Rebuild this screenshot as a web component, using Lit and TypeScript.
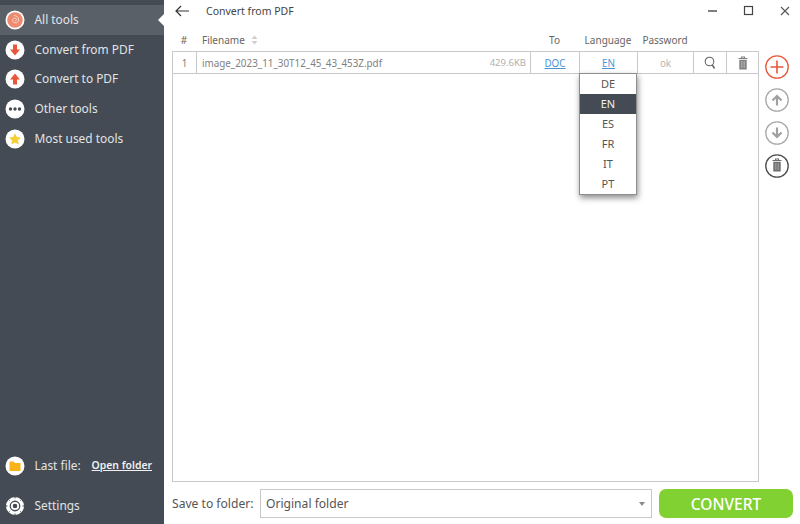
import { LitElement, html, css, svg } from "lit";
import { customElement } from "lit/decorators.js";

const badge = (inner: unknown) => html`<svg class="badge" viewBox="0 0 20 20" width="20" height="20"><circle cx="10" cy="10" r="9.5" fill="#fff"/>${inner}</svg>`;

const icons = {
  all: badge(svg`<circle cx="10" cy="10" r="7.800" fill="#ee8a70"/><path d="M10 10.500c.9.6 1.900-.4 1.400-1.500-.6-1.200-2.600-1.300-3.400 0-1 1.600.1 3.700 2 3.900 2.200.2 3.900-1.600 3.600-3.800-.3-2.300-2.500-3.900-4.800-3.400" fill="none" stroke="#fbd9cd" stroke-width="1"/>`),
  from: badge(svg`<path d="M8 4.500h4v5h3l-5 6-5-6h3z" fill="#e8573c"/>`),
  to: badge(svg`<path d="M8 15.500h4v-5h3l-5-6-5 6h3z" fill="#e8573c"/>`),
  other: badge(svg`<circle cx="5.500" cy="10" r="1.700" fill="#444b54"/><circle cx="10" cy="10" r="1.700" fill="#444b54"/><circle cx="14.500" cy="10" r="1.700" fill="#444b54"/>`),
  star: badge(svg`<path d="M10 4.200l1.800 3.800 4.100.5-3 2.900.8 4.100-3.700-2-3.700 2 .8-4.100-3-2.900 4.100-.5z" fill="#f5cf33"/>`),
  folder: badge(svg`<path d="M4.500 5.500h4l1.500 1.500h5.500v8h-11z" fill="#f9b319"/>`),
  gear: html`<svg class="badge" viewBox="0 0 20 20" width="20" height="20"><circle cx="10" cy="10" r="7.200" fill="none" stroke="#fff" stroke-width="3.600"/><circle cx="10" cy="10" r="3.200" fill="none" stroke="#fff" stroke-width="1.800"/><path d="M10 1v1.500M10 17.500V19M1 10h1.500M17.500 10H19M3.600 3.600l1 1M15.400 15.400l1 1M3.600 16.400l1-1M15.400 4.600l1-1" stroke="#444b54" stroke-width="1"/></svg>`,
};

const trash = (dark: string, light: string) => svg`<path d="M-4.500-5h9M-1.500-5v-1.500h3V-5" fill="none" stroke=${dark} stroke-width="1.100"/><path d="M-3.700-3.700h7.400V6h-7.400z" fill=${dark}/><path d="M-1.600-2.500v7M.0-2.500v7M1.600-2.500v7" stroke=${light} stroke-width=".6"/>`;

const arrow = (d: string) => svg`<path d=${d} fill="none" stroke="#a0a0a0" stroke-width="2.200"/>`;

const rail = (color: string, inner: unknown, width = 1.300) => html`<svg class="rail-icon" viewBox="0 0 24 24" width="24" height="24"><circle cx="12" cy="12" r="11.200" fill="none" stroke=${color} stroke-width=${width}/>${inner}</svg>`;

@customElement("app-root")
export class AppRoot extends LitElement {
  static styles = css`
    :host { display: flex; width: 800px; height: 524px; overflow: hidden; background: #fff; color: #4a4a4a; font-family: "Noto Sans", "Open Sans", sans-serif; font-size: 11px; }
    .side { width: 164px; flex: none; background: #444b54; color: #e2e4e6; display: flex; flex-direction: column; padding-top: 5px; box-sizing: border-box; font-size: 11.900px; }
    .item { height: 29.700px; display: flex; align-items: center; gap: 10px; padding-left: 4.500px; position: relative; }
    .item > span { padding-bottom: 2px; }
    .item.on { background: #5a6068; }
    .item.on::after { content: ""; position: absolute; right: 0; top: 9px; border: 6px solid transparent; border-left: 0; border-right: 6px solid #fff; }
    .badge { flex: none; }
    .spacer { flex: 1; }
    .last { height: 30px; margin-bottom: 7px; }
    .item > .open { margin-left: 1px; color: #f0f1f2; text-decoration: underline; font-size: 10.400px; font-weight: 600; }
    .gearrow { height: 36px; }
    .main { flex: 1; display: flex; flex-direction: column; min-width: 0; }
    .title { height: 21px; display: flex; align-items: center; padding-left: 11px; font-size: 10.500px; color: #444; }
    .back { margin-right: 17px; }
    .winctl { margin-left: auto; display: flex; transform: translateX(3px); }
    .winctl svg { width: 36px; height: 20px; }
    .body { flex: 1; display: flex; min-height: 0; padding-left: 8px; }
    .col { width: 587px; flex: none; display: flex; flex-direction: column; }
    .cols, .row { display: grid; grid-template-columns: 24px 301px 33px 49px 58px 56px 33px 32px; align-items: center; }
    .cols { height: 30px; padding-top: 8px; box-sizing: border-box; color: #666; font-size: 10px; text-align: center; }
    .left { text-align: left; padding-left: 6px; display: flex; align-items: center; gap: 6px; }
    .table { height: 431px; box-sizing: border-box; border: 1px solid #c9c9c9; position: relative; }
    .row { height: 22px; border-bottom: 1px solid #c9c9c9; box-sizing: border-box; text-align: center; font-size: 9.850px; color: #808080; }
    .row > * { height: 21px; display: flex; align-items: center; justify-content: center; border-right: 1px solid #c9c9c9; box-sizing: border-box; }
    .row > *:last-child { border-right: 0; }
    .row .fname { justify-content: flex-start; padding-left: 5px; border-right: 0; }
    .size { justify-content: flex-end !important; color: #b0b0b0; font-size: 9.500px; padding-right: 4px; }
    .link { color: #4a94d2; text-decoration: underline; }
    .ok { color: #b5b5b5; }
    .menu { position: absolute; left: 406px; top: 21px; width: 58px; box-sizing: border-box; border: 1px solid #8d8d8d; background: #fff; box-shadow: 1px 3px 6px rgba(0,0,0,.45); font-size: 11px; color: #555; }
    .menu div { height: 20px; display: flex; align-items: center; justify-content: center; padding-bottom: 1px; box-sizing: border-box; }
    .menu .sel { background: #444b54; color: #f0f0f0; }
    .rail { flex: 1; display: flex; flex-direction: column; align-items: center; padding-top: 34px; gap: 9px; padding-right: 6px; }
    .foot { height: 42px; flex: none; display: flex; align-items: flex-start; padding: 7px 7px 0 8px; box-sizing: border-box; font-size: 12.100px; color: #555; }
    .label { width: 88px; height: 29px; display: flex; align-items: center; flex: none; }
    .select { width: 392px; height: 29px; box-sizing: border-box; border: 1px solid #c9c9c9; display: flex; align-items: center; padding: 0 6px 0 5px; flex: none; }
    .caret { margin-left: auto; width: 0; height: 0; border: 3.500px solid transparent; border-top: 4px solid #8a8a8a; border-bottom: 0; }
    .go { margin-left: 7px; width: 134px; height: 29px; border-radius: 7px; background: #82d132; color: #fff; font-size: 15.500px; font-weight: 500; display: flex; align-items: center; justify-content: center; flex: none; }
  `;

  render() {
    return html`
      <nav class="side">
        <div class="item on">${icons.all}<span>All tools</span></div>
        <div class="item">${icons.from}<span>Convert from PDF</span></div>
        <div class="item">${icons.to}<span>Convert to PDF</span></div>
        <div class="item">${icons.other}<span>Other tools</span></div>
        <div class="item">${icons.star}<span>Most used tools</span></div>
        <div class="spacer"></div>
        <div class="item last">${icons.folder}<span>Last file:</span><span class="open">Open folder</span></div>
        <div class="item gearrow">${icons.gear}<span>Settings</span></div>
      </nav>
      <div class="main">
        <div class="title">
          <svg class="back" width="14" height="12" viewBox="0 0 14 12"><path d="M14 6H1M6 1L1 6l5 5" fill="none" stroke="#333" stroke-width="1.200"/></svg>
          <span>Convert from PDF</span>
          <div class="winctl">
            <svg viewBox="0 0 36 20"><path d="M13 10h9" stroke="#555" stroke-width="1.500"/></svg>
            <svg viewBox="0 0 36 20"><rect x="13.500" y="5.500" width="8" height="8" fill="none" stroke="#444" stroke-width="1.200"/></svg>
            <svg viewBox="0 0 36 20"><path d="M14 6l8 8M22 6l-8 8" stroke="#555" stroke-width="1.100"/></svg>
          </div>
        </div>
        <div class="body">
          <div class="col">
            <div class="cols">
              <span>#</span>
              <span class="left">Filename
                <svg width="7" height="10" viewBox="0 0 7 10"><path d="M3.500 0.500L6.500 4h-6zM3.500 9.500L6.500 6h-6z" fill="#d0d0d0"/></svg>
              </span>
              <span></span><span>To</span><span>Language</span><span>Password</span><span></span><span></span>
            </div>
            <div class="table">
              <div class="row">
                <span>1</span>
                <span class="fname">image_2023_11_30T12_45_43_453Z.pdf</span>
                <span class="size">429.6KB</span>
                <span class="link">DOC</span>
                <span class="link">EN</span>
                <span class="ok">ok</span>
                <span><svg width="14" height="14" viewBox="0 0 14 14"><circle cx="6.500" cy="5.500" r="4.300" fill="none" stroke="#666" stroke-width="1.100"/><path d="M9.300 9l2.200 3.500" stroke="#666" stroke-width="1.500"/></svg></span>
                <span><svg width="14" height="14" viewBox="-7 -7.500 14 14">${trash("#808080", "#c4c4c4")}</svg></span>
              </div>
              <div class="menu">
                <div>DE</div><div class="sel">EN</div><div>ES</div><div>FR</div><div>IT</div><div>PT</div>
              </div>
            </div>
          </div>
          <div class="rail">
            ${rail("#e8573c", svg`<path d="M12 5.500v13M5.500 12h13" stroke="#e8573c" stroke-width="1.600"/>`)}
            ${rail("#a8a8a8", arrow("M12 17.500V8M7.500 12.500L12 8l4.500 4.500"))}
            ${rail("#a8a8a8", arrow("M12 6.500V16M7.500 11.500L12 16l4.500-4.500"))}
            ${rail("#4c4c4c", svg`<g transform="translate(12 11.500)">${trash("#6c6c6c", "#b8b8b8")}</g>`)}
          </div>
        </div>
        <div class="foot">
          <span class="label">Save to folder:</span>
          <div class="select"><span>Original folder</span><i class="caret"></i></div>
          <div class="go">CONVERT</div>
        </div>
      </div>
    `;
  }
}
